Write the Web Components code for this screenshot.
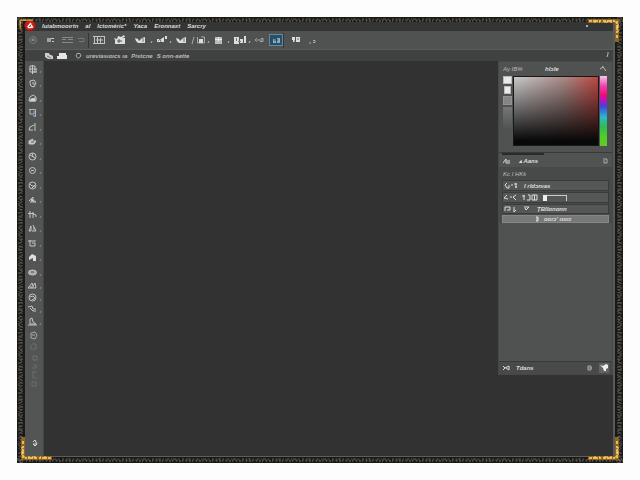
<!DOCTYPE html>
<html lang="en">
<head>
<meta charset="utf-8">
<title>Image editor</title>
<style>
html{height:100%}
body{margin:0;box-sizing:border-box;min-height:100vh;padding:17px;display:flex;background:#fdfdfd;font:italic bold 6px/10px "Liberation Sans",Arial,sans-serif;color:#dcdcdc}
</style>
</head>
<body>
<framed-window>
  <menu-bar></menu-bar>
  <main-toolbar></main-toolbar>
  <option-bar></option-bar>
  <work-area>
    <tool-rail slot="tools"></tool-rail>
    <side-panel>
      <colour-picker></colour-picker>
      <layer-list></layer-list>
    </side-panel>
  </work-area>
</framed-window>
<script>
const define = (name, html, setup) => customElements.define(name, class extends HTMLElement {
  constructor() {
    super();
    const t = document.createElement('template');
    t.innerHTML = '<style>:host,*{box-sizing:border-box}button,a{font:inherit;color:inherit;background:none;border:0;padding:0;margin:0;text-decoration:none;display:flex;align-items:center;justify-content:center;white-space:nowrap}svg{display:block;fill:none;stroke:currentColor}</style>' + html;
    this.attachShadow({mode: 'open'}).append(t.content.cloneNode(true));
    if (setup) setup(this.shadowRoot);
  }
});

const edge = (a, b) => {
  const line = (o, col, w, dash, off) =>
    `<line ${a === 'h' ? `x1="0" x2="100%" y1="${o}" y2="${o}"` : `y1="0" y2="100%" x1="${o}" x2="${o}"`} stroke="${col}" stroke-width="${w}" stroke-dasharray="${dash}" stroke-dashoffset="${off}"/>`;
  return `<svg class="${b}" width="100%" height="100%">${line(2, '#5c5646', 1, '2 2 1 1 3 2 1 3', 0)}${line(3, '#555040', 1, '3 1 1 2 2 1', 2)}${line(4, '#7a7058', 1, '1 2 2 1 1 3', 1)}${a === 'v' ? line(5, '#6a624e', 1, '2 1 1 2 1 1', 3) : ''}</svg>`;
};
const gold = c => `<svg class="g ${c}" viewBox="0 0 32 24" width="32" height="24"><path stroke="#8b6528" stroke-width="4" d="M32 3H3V24"/><path stroke="#efb84c" stroke-width="2" stroke-dasharray="3 1 5 1 2 2" d="M31 3H3V20"/><path stroke="#f9dc91" stroke-dasharray="2 3 1 4 4 2" d="M26 4H2V14"/></svg>`;

define('framed-window', `<style>
:host{flex:1;min-width:0;display:grid;grid-template:5px 1fr 6px/8px 1fr 8px;background:#191a1a;position:relative}
.t{grid-area:1/1/2/4}.l{grid-area:1/1/4/2}.r{grid-area:1/3/4/4;transform:scaleX(-1)}.b{grid-area:3/1/4/4}
svg{min-width:0;min-height:0;overflow:hidden}
main{grid-area:2/2/3/3;display:flex;flex-direction:column;min-width:0;min-height:0;background:#323232;border-right:2px solid #58595a;border-bottom:1px solid #596064}
.g{position:absolute}.tl{width:14px;height:12px;left:2px;top:1px}.tr{right:3px;top:1px;transform:scaleX(-1)}.bl{left:3px;bottom:2px;transform:scaleY(-1)}.br{right:3px;bottom:2px;transform:scale(-1)}
</style>
${edge('h', 't')}${edge('v', 'l')}${edge('v', 'r')}${edge('h', 'b')}
<main><slot></slot></main>${gold('tl')}${gold('tr')}${gold('bl')}${gold('br')}`);

define('menu-bar', `<style>
:host{display:block;background:#343535}
nav{display:flex;align-items:center;height:9px;gap:7px;line-height:8px;padding-bottom:1px}
.logo{width:10px;height:9px;overflow:visible}
i{margin-left:auto;margin-right:25px;width:2px;height:2px;background:#aaa}
</style><nav>
<svg class="logo" viewBox="0 0 10 9"><circle cx="5" cy="3.5" r="5.3" fill="#c9201b" stroke="#8c1715"/><path stroke="#fff" stroke-width="1.3" d="M6 1L3 4.5Q3 6 5 5.500L7.500 5L6 2.500"/></svg>
<a href="#">Iuiabmooırtn</a><a href="#">al</a><a href="#">Ictoméric*</a><a href="#">Yaca</a><a href="#">Eronnaxt</a><a href="#">Sarcry</a><i></i></nav>`);

const bar = {
  ring: '<circle cx="5" cy="5" r="3.500" stroke="#6f807c"/><path stroke="#8b9a96" d="M3 5h4M5 3v3"/>',
  blue: '<path fill="#9aa5b2" stroke="none" d="M1 3h4v4H1z"/><path stroke="#c8cbd0" d="M5 3.500h3M6 6.500h2"/>',
  lines: '<path stroke="#898989" d="M0 2.500h11M0 4.500h4m2 0h5M0 7.500h11"/>',
  dash: '<path stroke="#777" d="M1 3.500h6v3H2"/>',
  tick: '<path stroke="#bbb" d="M1 8l1-2"/>',
  grid: '<path stroke="#c4c4c4" d="M0 1.500h12M0 8.500h12M1.500 2v6M4.500 2v6M7.500 3v5M11.500 2v6M3 5h7"/>',
  camera: '<path fill="#ddd" stroke="none" d="M0 3l3 1 1-3 3 1 3-2 1 2-3 1h3v6H1V5z"/><path stroke="#555" d="M3 6h5M5 4v4"/>',
  shape: '<path fill="#ddd" stroke="none" d="M0 3l3 1 1 2 3-3 3-1v6H3L1 6z"/><path stroke="#777" d="M8 3v4"/>',
  pair: '<path fill="#ddd" stroke="none" d="M0 4h4l3-2v5H0z"/><path fill="#ddd" stroke="none" d="M8 1h2v3H8z"/><path stroke="#777" d="M1 6l2-2 1 3"/>',
  slash: '<path stroke="#aaa" d="M1 9l2-7"/>',
  crop: '<path stroke="#aaa" d="M1.500 2v6h7V2H5"/><path fill="#ddd" stroke="none" d="M3 4h4v4H3z"/>',
  block: '<path fill="#bbb" stroke="none" d="M1 2h7v7H1z"/><path stroke="#eee" d="M4.500 2v4M1 4.500h7"/>',
  bars: '<path fill="#ddd" stroke="none" d="M0 2h5v7H0zM6 4h3v4H6zM10 1h2v7h-2z"/><path stroke="#777" d="M2.500 3v3M4 6.500h3"/>',
  link: '<path stroke="#a8a8a8" d="M3 3.500L1 5l2 1.500M3 5h5M7 3.500h2v3H6"/>',
  chart: '<path fill="#8ba9bf" stroke="none" d="M2 4h3v4H2zM6 3h3v5H6z"/><path stroke="#1f465f" d="M3 5h4"/>',
  bits: '<path fill="#ddd" stroke="none" d="M0 2h3v5H1V5H0zM4 2h4v5H4z"/><path stroke="#666" d="M5 4h2M2 6h1"/>',
  small: '<path stroke="#aaa" d="M1 8h2M5 5.500h2v2H5"/>'
};
const bi = (n, w = 10) => `<button aria-label="${n}"><svg width="${w}" height="10">${bar[n]}</svg></button>`;
define('main-toolbar', `<style>
:host{display:grid;height:19px;background:#505151;border-bottom:1px solid #5c5c5c;align-items:center;grid-template-columns:15px 21px 12px 15px 3px 17px 23px 18px 6px 14px 4px 16px 7px 10px 5px 15px 5px 17px 4px 14px 3px 14px 4px 20px 9px}
hr{border:0;margin:0;width:1px;height:15px;background:#353535}
.on{background:#294f68;border:1px solid #63889f;height:12px}
</style>${bi('ring')}${bi('blue')}${bi('lines', 11)}${bi('dash', 8)}<hr>${bi('grid', 13)}${bi('camera', 12)}${bi('shape')}${bi('tick', 4)}${bi('pair')}${bi('tick', 4)}${bi('shape')}${bi('slash', 4)}${bi('crop')}${bi('tick', 4)}${bi('block')}${bi('tick', 4)}${bi('bars', 12)}${bi('tick', 4)}${bi('link')}<span></span><button class="on" aria-label="chart"><svg width="11" height="10">${bar.chart}</svg></button><hr>${bi('bits')}${bi('small', 8)}`);

define('option-bar', `<style>
:host{display:flex;height:11px;background:#404141;align-items:center;padding-left:20px;font:italic bold 6px/10px "Liberation Sans",Arial,sans-serif;color:#bcbcbc;gap:4px}
.v{margin-left:auto;margin-right:4px}svg{flex:none}
.p{margin-left:3px}
</style>
<svg width="8" height="8"><path fill="#ccc" stroke="none" d="M0 1h4v1l4 2v3H3L0 5z"/><path stroke="#777" d="M2 4l4 2"/></svg>
<svg width="11" height="8"><path fill="#e5e5e5" stroke="none" d="M2 1h7v6H2zM0 4h3v3H0zM8 3h2v4H8z"/></svg>
<svg class="p" width="7" height="8"><path stroke="#aaa" d="M2 1.500h3L6 4 3 6.500 1 4z"/></svg>
<span>ureviasıoıcs ıa</span><span>Pistcne</span><span>S onn-aette</span>
<svg class="v" width="3" height="7"><path stroke="#c1b6a0" d="M2 0v2L1 5"/></svg>`);

define('work-area', `<style>
:host{flex:1;display:flex;min-height:0;align-items:stretch}
section{flex:1;display:flex;justify-content:flex-end;align-items:flex-start;background:#323232}
</style><slot name="tools"></slot><section><slot></slot></section>`);

const T = [
  ['move', '<path d="M2 1h5v6H2zM4.500 0v9M5 4h4v3H5M1 4h3"/>'],
  ['lasso', '<path d="M2 2l4-1 2 3-2 4-3-1-1-3zM4 4h2v2"/>'],
  ['select', '<path d="M1 7l1-4 3-2 3 2v4z"/><path fill="#ddd" d="M3 5l4-1v3H2z"/>'],
  ['frame', '<path stroke="#aeb8ce" d="M1 1.500h6.500v7M2 2v4h4V3M5 8h3"/>'],
  ['wand', '<path d="M7 0v8M6 2L2 4 1 7h4"/>'],
  ['slice', '<path fill="#ccc" d="M1 7V4l4-2-1 2h4L6 7z"/><path stroke="#555" d="M3 5h3"/>'],
  ['heal', '<circle cx="4.500" cy="4.500" r="3.500"/><path d="M2 3l5 3M4 1l1 4"/>'],
  ['circle', '<circle cx="4.500" cy="4.500" r="3"/><path d="M3 4.500h3"/>'],
  ['clone', '<circle cx="4.500" cy="4.500" r="3.500"/><path d="M2 3l2 2h3M4 7l3-3"/>'],
  ['stamp', '<path d="M1 6l4-4v3l3 2H2"/><path fill="#ddd" d="M4 4l2 2H3z"/>'],
  ['history', '<path d="M2 1v7M5 2v6M0 3.500h6M5 4l3 1v2"/>'],
  ['pen', '<path d="M1 7l2-5v5zM5 1l3 6H4M6 3v3"/>'],
  ['shape', '<path d="M0 2h8M2 1v6h5V4H4"/>'],
  ['bucket', '<path fill="#ddd" stroke="none" d="M1 7V4l3-3 4 2v5H5V5z"/>'],
  ['ellipse', '<ellipse cx="4.500" cy="4.500" rx="4" ry="2.500" fill="#aaa"/><path stroke="#555" d="M3 4h3"/>'],
  ['mountain', '<path d="M0 7l4-5 1 3 2-3 1 5z"/><path d="M2 6h4"/>'],
  ['zoom', '<circle cx="4.500" cy="4.500" r="3.500"/><path d="M2 4l3-1 2 2-3 2"/>'],
  ['brush', '<path d="M0 2l4-1 1 3h3M2 3l3 3h3"/>'],
  ['hand', '<path d="M2 7V2l2-1 1 4 3 2zM0 8h9"/>']
];
const tb = (t, c) => `<button class="${c}" aria-label="${t[0]}"><svg width="9" height="9">${t[1]}</svg><svg class="m" width="3" height="9"><path d="M1 8l1-2"/></svg></button>`;
let tools = '';
for (let i = 0; i < 14; i += 2) tools += `<div>${tb(T[i], 'n')}${tb(T[i + 1], 'n')}</div>`;
tools += `<div>${tb(T[14], 'n')}${T.slice(15).map(t => tb(t, 's')).join('')}</div>`;
define('tool-rail', `<style>
:host{display:flex;flex:none;flex-direction:column;gap:1px;width:19px;padding:1px 0 8px;background:#535454;color:#c5c5c5;border-right:1px solid #444}
button{width:18px;gap:2px;padding-left:2px}.n{height:14px}.s{height:12px}.m{color:#888}
.f{color:#aaa;height:14px;justify-content:start;padding-left:4px}.d{color:#6c6d6d}
.end{margin-top:auto;color:#ddd;height:10px}
</style>${tools}<button class="f" aria-label="hexagon"><svg width="9" height="9"><path d="M2 2l4-1 2 3-2 4-4-1zM3 4h3"/></svg></button>
<svg class="d" width="18" height="44"><path d="M7 1h4v5H6V2M8 13h4v4H8zM8 22h3v3H7M7 29h5M8 29v6h4M7 39h4v4H7z"/></svg>
<button class="end" aria-label="colours"><svg width="6" height="8"><path d="M1 3l2-2 1 2 1 2-2 2-2-2h3"/></svg></button>`);

define('side-panel', `<style>
:host{display:flex;flex-direction:column;width:115px;min-height:314px;background:#505151;border:1px solid #474848}
</style><slot></slot>`);

define('colour-picker', `<style>
:host{display:block;padding:0 4px 6px;border-bottom:1px solid #383939}
header{display:grid;grid-template-columns:42px 1fr 8px;align-items:center;height:13px;margin-bottom:1px}
header button{justify-content:start}
.soft{font-weight:normal;color:#bbb}
.row{display:grid;grid-template-columns:9px 1fr 8px;gap:1px;height:70px}
.sw{display:grid;grid-template-rows:8px 8px 9px 22px;row-gap:2px;align-content:start}
.sw button{width:9px;background:#e9e9e8;border:1px solid #bbb}
.sw .s{width:7px;justify-self:center}.sw .g{background:#858683;border-color:#939393}.sw .h{border:0;background:linear-gradient(#777,#505151)}
.field{border:1px solid #171717;background:linear-gradient(to bottom,transparent,#080808 94%),linear-gradient(to right,#cacaca,#a98b88 58%,#bd4741)}
input{appearance:none;margin:0;width:7px;height:70px;background:linear-gradient(#f3c8e7,#f33baf 15%,#f30b77 27%,#a516d0 37%,#4142df 43%,#2ab9cc 59%,#2dbb58 72%,#4fd021 88%,#65c634)}
input::-webkit-slider-thumb{appearance:none;width:1px;height:1px;opacity:0}
</style><header><button class="soft">Ay IB%</button><button>hlɔlɐ</button><button aria-label="Panel menu"><svg width="7" height="7"><path stroke="#bbb" d="M0 4l3-2 3 4M3 1v2"/></svg></button></header>
<div class="row"><div class="sw"><button aria-label="White"></button><button class="s" aria-label="Light"></button><button class="g" aria-label="Grey"></button><button class="h" aria-label="Dark"></button></div>
<div class="field"></div><input type="range" aria-label="Hue"></div>`);

define('layer-list', `<style>
:host{flex:1;display:flex;flex-direction:column}
.strip{width:42px;height:2px;margin:0 3px;background:#292a2a;flex:none}
header{display:flex;height:12px;align-items:center;padding:0 4px;gap:8px;background:#515252}
.end{margin-left:auto}
h2{margin:0;font:italic 6px/12px "Liberation Sans",Arial,sans-serif;color:#bfbfbf;height:13px;padding:1px 4px 0;background:#484949}
ul{list-style:none;margin:0;padding:0 3px;display:grid;grid-template-rows:11px 11px 10px 8px;row-gap:1px;background:#484949}
li{display:flex;align-items:center;gap:5px;background:#555656;border:1px solid #3a3b3b;padding-left:1px;line-height:8px}
li svg,header svg,footer svg{flex:none}
li.sel{background:#777877;border-color:#858686;padding-left:33px}
input{appearance:none;width:24px;height:6px;margin:0;background:linear-gradient(#ccc,#ccc) top/100% 1px no-repeat;border-right:1px solid #ccc}
input::-webkit-slider-thumb{appearance:none;width:4px;height:6px;background:#eee}
footer{margin-top:auto;display:flex;align-items:center;height:13px;padding:0 3px 0 4px;gap:6px;border-top:1px solid #383939;background:#484949}
.key{background:#626363;width:10px;height:10px}
</style><div class="strip"></div>
<header><svg width="8" height="7"><path d="M0 5l3-4v4h4M4 3h3"/></svg><button>▴ Aans</button><button class="end" aria-label="Options"><svg width="5" height="6"><path stroke="#aaa" d="M0 1h4v4H1V2"/></svg></button></header>
<h2>Kc I HKk</h2>
<ul>
<li><svg width="15" height="7"><path d="M3 1L1 3l2 3h2V3M7 3h2M12 1v5M10 2h3M11 5h2"/></svg><button>I rldɔnıas</button></li>
<li><svg width="13" height="7"><path d="M3 1L0 4l4 1M6 3h2M12 1L9 3l3 3"/></svg><svg width="16" height="7"><path d="M2 1v5M0 2h3M6 1h2v5H5M10 1h5v5h-5zM12.500 1v5"/></svg><input type="range" value="0" aria-label="Opacity"></li>
<li><svg width="13" height="7"><path d="M1 1h5v3H3M1 1v4M10 1v5l2-2"/></svg><svg width="10" height="7"><path d="M2 1h5L4 4 3 2"/></svg><button>ŢBIlɑnɑnn</button></li>
<li class="sel"><svg width="3" height="6"><path d="M0 1h2v4H0M1 1v4"/></svg><button>ʋoıɔʼ ıɪıııɪ</button></li>
</ul>
<footer><svg width="7" height="7"><path d="M0 1l2 2-2 2M2 3l4-2v4L3 3"/></svg><button>Tdans</button><button class="end" aria-label="Effects"><svg width="6" height="7"><path stroke="#b6a99a" d="M1 1h3v4H1zM1 3h4"/></svg></button><button class="key" aria-label="New layer"><svg width="8" height="8"><path fill="#eee" stroke="none" d="M0 1l3 1 3-2 2 1v3L6 5v2H4L3 4z"/></svg></button></footer>`);
</script>
</body>
</html>
